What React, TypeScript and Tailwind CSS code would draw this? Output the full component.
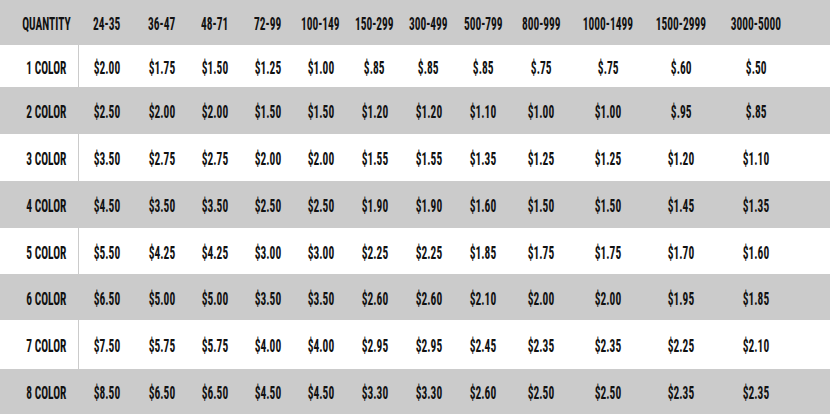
const headers = ['24-35', '36-47', '48-71', '72-99', '100-149', '150-299', '300-499', '500-799', '800-999', '1000-1499', '1500-2999', '3000-5000']

const rows: { label: string; prices: string[]; h: string }[] = [
  { label: '1 COLOR', h: 'h-[42px]', prices: ['$2.00', '$1.75', '$1.50', '$1.25', '$1.00', '$.85', '$.85', '$.85', '$.75', '$.75', '$.60', '$.50'] },
  { label: '2 COLOR', h: 'h-[47px]', prices: ['$2.50', '$2.00', '$2.00', '$1.50', '$1.50', '$1.20', '$1.20', '$1.10', '$1.00', '$1.00', '$.95', '$.85'] },
  { label: '3 COLOR', h: 'h-[47px]', prices: ['$3.50', '$2.75', '$2.75', '$2.00', '$2.00', '$1.55', '$1.55', '$1.35', '$1.25', '$1.25', '$1.20', '$1.10'] },
  { label: '4 COLOR', h: 'h-[47px]', prices: ['$4.50', '$3.50', '$3.50', '$2.50', '$2.50', '$1.90', '$1.90', '$1.60', '$1.50', '$1.50', '$1.45', '$1.35'] },
  { label: '5 COLOR', h: 'h-[46px]', prices: ['$5.50', '$4.25', '$4.25', '$3.00', '$3.00', '$2.25', '$2.25', '$1.85', '$1.75', '$1.75', '$1.70', '$1.60'] },
  { label: '6 COLOR', h: 'h-[46px]', prices: ['$6.50', '$5.00', '$5.00', '$3.50', '$3.50', '$2.60', '$2.60', '$2.10', '$2.00', '$2.00', '$1.95', '$1.85'] },
  { label: '7 COLOR', h: 'h-[49px]', prices: ['$7.50', '$5.75', '$5.75', '$4.00', '$4.00', '$2.95', '$2.95', '$2.45', '$2.35', '$2.35', '$2.25', '$2.10'] },
  { label: '8 COLOR', h: 'h-[45px]', prices: ['$8.50', '$6.50', '$6.50', '$4.50', '$4.50', '$3.30', '$3.30', '$2.60', '$2.50', '$2.50', '$2.35', '$2.35'] },
]

// column widths tuned so each label sits over its column center
const grid = 'grid grid-cols-[79px_56px_53px_54px_52px_53px_55px_53px_56px_60px_74px_72px_78px_35px] items-center'

const Cell = ({ text, first }: { text: string; first?: boolean }) => (
  <div className={`flex h-full items-center justify-center pt-[2px] ${first ? 'pl-[14px] border-r border-[#cbcbcb]' : ''}`}>
    <span className="inline-block scale-x-[0.6] whitespace-nowrap text-[19px] font-bold leading-none text-[#111]">{text}</span>
  </div>
)

export default function App() {
  return (
    <div className="w-[832px] h-[417px] bg-white" style={{ fontFamily: '"Roboto Condensed", Roboto, sans-serif' }}>
      <div className="w-[830px]">
        <div className={`${grid} h-[45px] bg-[#cbcbcb]`}>
          <Cell text="QUANTITY" first />
          {headers.map((h) => (
            <Cell key={h} text={h} />
          ))}
          <div />
        </div>
        {rows.map((r, i) => (
          <div key={r.label} className={`${grid} ${r.h} ${i % 2 === 1 ? 'bg-[#cbcbcb]' : 'bg-white'}`}>
            <Cell text={r.label} first />
            {r.prices.map((p, j) => (
              <Cell key={j} text={p} />
            ))}
            <div />
          </div>
        ))}
      </div>
    </div>
  )
}
